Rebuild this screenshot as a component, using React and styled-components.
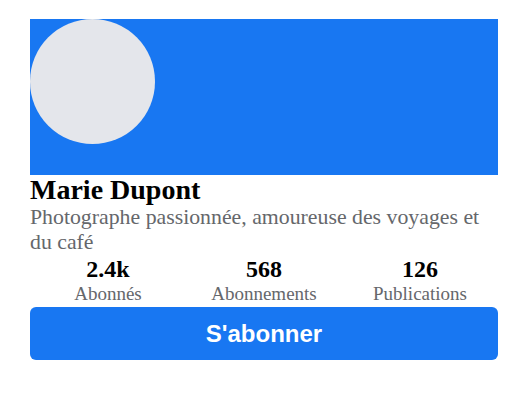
import React from 'react';
import styled, { createGlobalStyle } from 'styled-components';

const GlobalStyle = createGlobalStyle`
    body {
        margin: 0;
        background: #ffffff;
        font-family: "Liberation Serif", "Times New Roman", serif;
    }
`

const stats = [
    { value: '2.4k', label: 'Abonnés' },
    { value: '568', label: 'Abonnements' },
    { value: '126', label: 'Publications' },
]

function App(){
    return (
        <>
            <GlobalStyle />
            <Card>
                <Cover>
                    <Avatar />
                </Cover>
                <Name>Marie Dupont</Name>
                <Bio>Photographe passionnée, amoureuse des voyages et du café</Bio>
                <Stats>
                    {stats.map((s) => (
                        <Stat key={s.label}>
                            <StatValue>{s.value}</StatValue>
                            <StatLabel>{s.label}</StatLabel>
                        </Stat>
                    ))}
                </Stats>
                <SubscribeButton>S'abonner</SubscribeButton>
            </Card>
        </>
    )
}

const Card = styled.div`
    width: 468px;
    margin: 19px 0 0 30px;
    display: flex;
    flex-direction: column;
`

const Cover = styled.div`
    height: 156px;
    background: #1877f2;
    display: flex;
    align-items: flex-start;
`

const Avatar = styled.div`
    width: 125px;
    height: 125px;
    border-radius: 50%;
    background: #e4e6eb;
`

const Name = styled.h2`
    margin: 0;
    font-size: 28px;
    line-height: 30px;
    font-weight: 700;
    color: #000000;
`

const Bio = styled.p`
    margin: 0;
    font-size: 21.8px;
    line-height: 25px;
    color: #65676b;
`

const Stats = styled.div`
    display: grid;
    grid-template-columns: repeat(3, 1fr);
`

const Stat = styled.div`
    display: flex;
    flex-direction: column;
    align-items: center;
`

const StatValue = styled.span`
    font-size: 24px;
    line-height: 28px;
    font-weight: 700;
    color: #000000;
`

const StatLabel = styled.span`
    font-size: 19px;
    line-height: 22px;
    color: #65676b;
`

const SubscribeButton = styled.button`
    margin-top: 2px;
    height: 53px;
    border: none;
    border-radius: 6px;
    background: #1877f2;
    color: #ffffff;
    font-family: "Liberation Sans", Arial, sans-serif;
    font-size: 24px;
    font-weight: 700;
    cursor: pointer;
`

export default App;
